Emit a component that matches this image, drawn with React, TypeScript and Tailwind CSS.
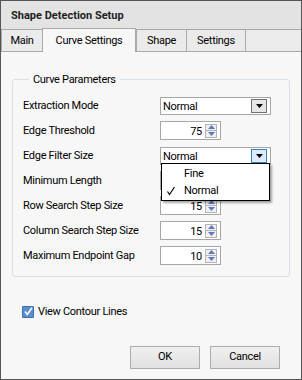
import { ReactNode } from "react";

const rows: { label: string; kind: "combo" | "spin"; value: string; open?: boolean }[] = [
  { label: "Extraction Mode", kind: "combo", value: "Normal" },
  { label: "Edge Threshold", kind: "spin", value: "75" },
  { label: "Edge Filter Size", kind: "combo", value: "Normal", open: true },
  { label: "Minimum Length", kind: "spin", value: "20" },
  { label: "Row Search Step Size", kind: "spin", value: "15" },
  { label: "Column Search Step Size", kind: "spin", value: "15" },
  { label: "Maximum Endpoint Gap", kind: "spin", value: "10" },
];

function Combo({ value, open }: { value: string; open?: boolean }) {
  return (
    <div className="flex h-[18px] w-[111px] items-center border border-[#a6a6a6] bg-white pl-[2px] pr-[3px]">
      <span className="flex-1 pt-[1px] leading-none">{value}</span>
      <div
        className={`flex h-[14px] w-[16px] items-center justify-center border ${
          open ? "border-[#3c7fb1] bg-[#dcecfc]" : "border-[#707070] bg-[#e6e6e6]"
        }`}
      >
        <svg width="7" height="4" viewBox="0 0 7 4">
          <path d="M0 0h7L3.5 4z" fill="#000" />
        </svg>
      </div>
    </div>
  );
}

function Spin({ value }: { value: string }) {
  return (
    <div className="flex h-[19px] w-[61px] items-center border border-[#a6a6a6] bg-white pr-[3px]">
      <span className="flex-1 pr-[3px] pt-[1px] text-right leading-none">{value}</span>
      <div className="flex h-[14px] w-[12px] flex-col border border-[#b4b4b4] bg-[#f0f0f0]">
        <div className="flex flex-1 items-center justify-center border-b border-[#b4b4b4]">
          <svg width="7" height="4" viewBox="0 0 7 4">
            <path d="M0 4h7L3.5 0z" fill="#5b79c0" />
          </svg>
        </div>
        <div className="flex flex-1 items-center justify-center">
          <svg width="7" height="4" viewBox="0 0 7 4">
            <path d="M0 0h7L3.5 4z" fill="#5b79c0" />
          </svg>
        </div>
      </div>
    </div>
  );
}

function Tab({ children, active, width }: { children: ReactNode; active?: boolean; width: string }) {
  return active ? (
    <div className={`relative z-10 -mb-px flex h-[24px] ${width} items-start justify-center border border-b-0 border-[#a9a9a9] bg-[#f7f7f7] pt-[4px]`}>
      {children}
    </div>
  ) : (
    <div className={`flex h-[22px] ${width} items-center justify-center border-t border-l border-[#a9a9a9] bg-[#ebebeb] pt-[2px]`}>
      {children}
    </div>
  );
}

export default function App() {
  return (
    <div
      className="relative flex h-[380px] w-[302px] flex-col border border-[#555] bg-[#f7f7f7] text-[11px] tracking-[-0.3px] text-black"
      style={{ fontFamily: 'Roboto, "Liberation Sans", sans-serif' }}
    >
      {/* Title */}
      <div className="flex h-[28px] items-center bg-[#e3e3e3] px-[10px] pt-[2px] font-bold tracking-normal text-[#1e1e1e]">
        Shape Detection Setup
      </div>

      {/* Tabs */}
      <div className="flex h-[23px] items-end border-b border-[#a9a9a9] bg-[#e3e3e3]">
        <Tab width="w-[41px]">Main</Tab>
        <Tab width="w-[94px]" active>Curve Settings</Tab>
        <Tab width="w-[50px]">Shape</Tab>
        <Tab width="w-[59px]">Settings</Tab>
        <div className="h-[22px] flex-1 border-t border-l border-[#a9a9a9] bg-[#ebebeb]" />
      </div>

      {/* Body */}
      <div className="flex flex-1 flex-col px-[11px] pt-[18px]">
        <fieldset className="rounded-[3px] border border-[#d5dfe5] pb-[11px] pl-[10px] pt-[8px]">
          <legend className="ml-[6px] px-[4px] pt-[2px] leading-[16px]">Curve Parameters</legend>
          <div className="flex flex-col gap-[6px]">
            {rows.map((r) => (
              <div key={r.label} className="flex h-[19px] items-center">
                <span className="w-[137px] whitespace-nowrap pt-[2px]">{r.label}</span>
                {r.kind === "combo" ? <Combo value={r.value} open={r.open} /> : <Spin value={r.value} />}
              </div>
            ))}
          </div>
        </fieldset>

        <label className="mt-[26px] flex items-center gap-[4px] pl-[10px]">
          <span className="flex h-[12px] w-[12px] items-center justify-center rounded-[1px] border border-[#3d6ea8] bg-[#5a8ed0]">
            <svg width="9" height="9" viewBox="0 0 9 9">
              <path d="M1 4.5l2.3 3L8 0.8" stroke="#fff" strokeWidth="1.6" fill="none" />
            </svg>
          </span>
          <span className="pt-[1px]">View Contour Lines</span>
        </label>

        <div className="mt-auto mb-[10px] flex justify-end gap-[10px] pr-[10px]">
          <button className="h-[23px] w-[70px] border border-[#adadad] bg-gradient-to-b from-[#f0f0f0] to-[#e1e1e1]">
            OK
          </button>
          <button className="h-[23px] w-[70px] border border-[#adadad] bg-gradient-to-b from-[#f0f0f0] to-[#e1e1e1]">
            Cancel
          </button>
        </div>
      </div>

      {/* Open dropdown list */}
      <div className="absolute left-[160px] top-[162px] z-20 w-[109px] border border-black bg-white py-[1px] shadow-[2px_2px_2px_rgba(0,0,0,0.35)]">
        <div className="flex h-[17px] items-center pl-[22px] pt-[1px]">Fine</div>
        <div className="flex h-[17px] items-center pt-[1px]">
          <span className="w-[22px] pl-[4px]">
            <svg width="10" height="10" viewBox="0 0 10 10">
              <path d="M1.5 5.5l2 3L8.5 1" stroke="#000" strokeWidth="1.2" fill="none" />
            </svg>
          </span>
          Normal
        </div>
      </div>
    </div>
  );
}
